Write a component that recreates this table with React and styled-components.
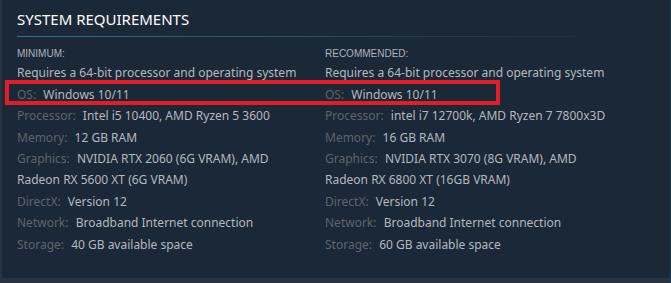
import React from "react";
import styled, { createGlobalStyle } from "styled-components";

const GlobalStyle = createGlobalStyle`
  html, body {
    margin: 0;
    padding: 0;
    background: #1b2838;
  }
  #root {
    width: 671px;
    height: 283px;
    overflow: hidden;
  }
`;

const minimum = [
  { value: ["Requires a 64-bit processor and operating system"] },
  { label: "OS:", value: ["Windows 10/11"] },
  { label: "Processor:", value: ["Intel i5 10400, AMD Ryzen 5 3600"] },
  { label: "Memory:", value: ["12 GB RAM"] },
  {
    label: "Graphics:",
    value: ["NVIDIA RTX 2060 (6G VRAM), AMD", "Radeon RX 5600 XT (6G VRAM)"],
  },
  { label: "DirectX:", value: ["Version 12"] },
  { label: "Network:", value: ["Broadband Internet connection"] },
  { label: "Storage:", value: ["40 GB available space"] },
];

const recommended = [
  { value: ["Requires a 64-bit processor and operating system"] },
  { label: "OS:", value: ["Windows 10/11"] },
  { label: "Processor:", value: ["intel i7 12700k, AMD Ryzen 7 7800x3D"] },
  { label: "Memory:", value: ["16 GB RAM"] },
  {
    label: "Graphics:",
    value: ["NVIDIA RTX 3070 (8G VRAM), AMD", "Radeon RX 6800 XT (16GB VRAM)"],
  },
  { label: "DirectX:", value: ["Version 12"] },
  { label: "Network:", value: ["Broadband Internet connection"] },
  { label: "Storage:", value: ["60 GB available space"] },
];

const ReqColumn = ({ title, rows }) => (
  <Column>
    <ColumnTitle>{title}</ColumnTitle>
    <ReqList>
      {rows.map((row, i) => (
        <ReqItem key={i}>
          {row.label && <Label>{row.label}</Label>}
          {row.label && " "}
          {row.value.map((line, j) => (
            <React.Fragment key={j}>
              {j > 0 && <br />}
              {line}
            </React.Fragment>
          ))}
        </ReqItem>
      ))}
    </ReqList>
  </Column>
);

const App = () => {
  return (
    <>
      <GlobalStyle />
      <Page>
        <Section>
          <Heading>System Requirements</Heading>
          <Columns>
            <ReqColumn title="Minimum:" rows={minimum} />
            <ReqColumn title="Recommended:" rows={recommended} />
          </Columns>
          <Highlight />
        </Section>
        <BottomBar />
      </Page>
    </>
  );
};

const Page = styled.div`
  display: flex;
  flex-direction: column;
  height: 283px;
  background: #1b2838;
  border-right: 1px solid #22384d;
`;

const Section = styled.section`
  position: relative;
  flex: 1;
  padding: 9px 0 0 15px;
  border-left: 2px solid #29323d;
`;

const Heading = styled.h2`
  margin: 0;
  padding-bottom: 5px;
  height: 23px;
  font-family: "Noto Sans", sans-serif;
  font-size: 15px;
  font-weight: normal;
  line-height: 20px;
  text-transform: uppercase;
  color: #ffffff;
  background-image: linear-gradient(to right, #3b6e8c 0%, rgba(59, 110, 140, 0) 100%);
  background-repeat: no-repeat;
  background-position: left bottom;
  background-size: 605px 1px;
`;

const Columns = styled.div`
  display: grid;
  grid-template-columns: 298px 298px;
  column-gap: 10px;
  margin-top: 11px;
`;

const Column = styled.div`
  display: flex;
  flex-direction: column;
`;

const ColumnTitle = styled.div`
  font-family: "Liberation Sans", Arial, sans-serif;
  font-size: 10px;
  line-height: 12px;
  text-transform: uppercase;
  color: #acb2b8;
`;

const ReqList = styled.ul`
  list-style: none;
  margin: 3px 0 0 0;
  padding: 0;
`;

const ReqItem = styled.li`
  font-family: "Noto Sans", sans-serif;
  font-size: 12px;
  line-height: 20.6px;
  margin-bottom: 1px;
  white-space: nowrap;
  color: #b3b9bf;
`;

const Label = styled.span`
  color: #5e6469;
  margin-right: 4px;
`;

const Highlight = styled.div`
  position: absolute;
  left: 3px;
  top: 80px;
  width: 495px;
  height: 25px;
  box-sizing: border-box;
  border: 4px solid #e31d25;
  pointer-events: none;
`;

const BottomBar = styled.div`
  height: 5px;
  background: #29333f;
`;

export default App;
